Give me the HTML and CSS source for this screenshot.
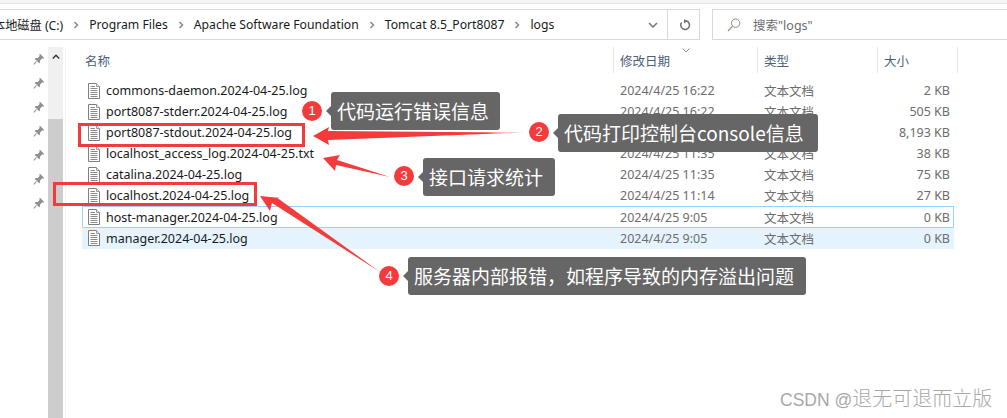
FILE: index.html
```html
<!DOCTYPE html>
<html lang="zh-CN">
<head>
<meta charset="utf-8">
<title>logs</title>
<link rel="stylesheet" href="styles.css">
</head>
<body>
<svg class="defs" width="0" height="0" aria-hidden="true">
  <symbol id="pin" viewBox="0 0 12 12">
    <path d="M7 .8 11.2 5 10.2 5.8 9.3 5.3 7 7.4 7 9.6 6.1 10.3 1.8 6 2.6 5.1 4.7 5 6.8 2.8 6.2 1.8Z" fill="#8f8f8f"/>
    <path d="M3.4 8.6 .8 11.4" stroke="#9a9a9a" stroke-width="1.2" fill="none"/>
  </symbol>
  <symbol id="doc" viewBox="0 0 12 16">
    <path d="M.5.5H8.5L11.5 3.5V15.5H.5Z" fill="#fff" stroke="#7f7f7f"/>
    <path d="M8.5 .5V3.5H11.5" fill="#eee" stroke="#9a9a9a"/>
    <path d="M2.5 3.5H7M2.5 5.5H9.5M2.5 7.5H9.5M2.5 9.5H9.5M2.5 11.5H9.5M2.5 13.5H9.5" stroke="#8a8a8a" fill="none"/>
  </symbol>
  <symbol id="crumb" viewBox="0 0 6 8">
    <path d="M1.5 1 4.5 4 1.5 7" stroke="#8a8a8a" stroke-width="1.5" fill="none"/>
  </symbol>
</svg>

<div class="top-strip"></div>
<div class="toolbar">
  <div class="address">
    <span class="drive">本地磁盘 (C:)</span>
    <svg class="sep"><use href="#crumb"/></svg>
    <span>Program Files</span>
    <svg class="sep"><use href="#crumb"/></svg>
    <span>Apache Software Foundation</span>
    <svg class="sep"><use href="#crumb"/></svg>
    <span>Tomcat 8.5_Port8087</span>
    <svg class="sep"><use href="#crumb"/></svg>
    <span>logs</span>
    <svg class="drop" viewBox="0 0 10 6"><path d="M1 1 5 5 9 1" stroke="#777" stroke-width="1.5" fill="none"/></svg>
  </div>
  <div class="refresh">
    <svg viewBox="0 0 12 12" width="12" height="12"><path d="M7.2 1.8A4.4 4.4 0 1 1 2.6 3.4" stroke="#6f6f6f" stroke-width="1.5" fill="none"/><path d="M5 .2 8.4 2 5 4.4Z" fill="#6f6f6f"/></svg>
  </div>
  <div class="search">
    <svg viewBox="0 0 14 14" width="14" height="14"><circle cx="8.6" cy="5.2" r="4.2" stroke="#8a8a8a" fill="none"/><path d="M5.6 8.2 1 13" stroke="#b08a70" stroke-width="1.2" fill="none"/></svg>
    <span>搜索"logs"</span>
  </div>
</div>

<div class="main">
  <div class="pins">
    <svg class="pin"><use href="#pin"/></svg>
    <svg class="pin"><use href="#pin"/></svg>
    <svg class="pin"><use href="#pin"/></svg>
    <svg class="pin"><use href="#pin"/></svg>
    <svg class="pin"><use href="#pin"/></svg>
    <svg class="pin"><use href="#pin"/></svg>
    <svg class="pin"><use href="#pin"/></svg>
  </div>
  <div class="scrollbar">
    <div class="scroll-up"><svg viewBox="0 0 8 5" width="8" height="5"><path d="M.8 4.4 4 1.2 7.2 4.4" stroke="#333" stroke-width="1.4" fill="none"/></svg></div>
    <div class="thumb"></div>
  </div>
  <div class="list">
    <div class="head">
      <div class="hcell hname">名称</div>
      <div class="hcell hdate">修改日期
        <svg class="sort" viewBox="0 0 8 5" width="8" height="5"><path d="M.5.5 4 4 7.5.5" stroke="#8a8a8a" fill="none"/></svg>
      </div>
      <div class="hcell htype">类型</div>
      <div class="hcell hsize">大小</div>
    </div>
    <div class="rows">
      <div class="row"><div class="name"><svg class="doc"><use href="#doc"/></svg>commons-daemon.2024-04-25.log</div><div class="meta">2024/4/25 16:22</div><div class="meta">文本文档</div><div class="size">2 KB</div></div>
      <div class="row"><div class="name"><svg class="doc"><use href="#doc"/></svg>port8087-stderr.2024-04-25.log</div><div class="meta">2024/4/25 16:22</div><div class="meta">文本文档</div><div class="size">505 KB</div></div>
      <div class="row"><div class="name"><svg class="doc"><use href="#doc"/></svg>port8087-stdout.2024-04-25.log</div><div class="meta">2024/4/25 11:35</div><div class="meta">文本文档</div><div class="size">8,193 KB</div></div>
      <div class="row"><div class="name"><svg class="doc"><use href="#doc"/></svg>localhost_access_log.2024-04-25.txt</div><div class="meta">2024/4/25 11:35</div><div class="meta">文本文档</div><div class="size">38 KB</div></div>
      <div class="row"><div class="name"><svg class="doc"><use href="#doc"/></svg>catalina.2024-04-25.log</div><div class="meta">2024/4/25 11:35</div><div class="meta">文本文档</div><div class="size">75 KB</div></div>
      <div class="row"><div class="name"><svg class="doc"><use href="#doc"/></svg>localhost.2024-04-25.log</div><div class="meta">2024/4/25 11:14</div><div class="meta">文本文档</div><div class="size">27 KB</div></div>
      <div class="row focused"><div class="name"><svg class="doc"><use href="#doc"/></svg>host-manager.2024-04-25.log</div><div class="meta">2024/4/25 9:05</div><div class="meta">文本文档</div><div class="size">0 KB</div></div>
      <div class="row selected"><div class="name"><svg class="doc"><use href="#doc"/></svg>manager.2024-04-25.log</div><div class="meta">2024/4/25 9:05</div><div class="meta">文本文档</div><div class="size">0 KB</div></div>
    </div>
  </div>
</div>

<svg class="arrows" viewBox="0 0 1007 418" aria-hidden="true">
  <defs>
    <linearGradient id="tail" x1="0" x2="1" y1="0" y2="0">
      <stop offset="0" stop-color="#f33b3b"/>
      <stop offset="0.82" stop-color="#f33b3b"/>
      <stop offset="1" stop-color="#f33b3b" stop-opacity="0.15"/>
    </linearGradient>
  </defs>
  <polygon class="fade" points="525,132.5 328,131 329,127 313,136 329,145 328,140"/>
  <polygon points="390,177 337,160 340,155 323,158 335,171 336,165"/>
  <polygon points="380,272 276,197 280,198 260,196 270,211 272,203"/>
</svg>
<div class="redbox rb1"></div>
<div class="redbox rb2"></div>

<div class="badge b1">1</div>
<div class="bubble c1">代码运行错误信息</div>
<div class="badge b2">2</div>
<div class="bubble c2">代码打印控制台console信息</div>
<div class="badge b3">3</div>
<div class="bubble c3">接口请求统计</div>
<div class="badge b4">4</div>
<div class="bubble c4">服务器内部报错，如程序导致的内存溢出问题</div>

<div class="watermark">CSDN @<span class="wm-cjk">退无可退而立版</span></div>
</body>
</html>
```
FILE: styles.css
```css
* { box-sizing: border-box; }
html, body { margin: 0; height: 100%; }
body {
  width: 1007px;
  height: 418px;
  overflow: hidden;
  background: #fff;
  position: relative;
  display: flex;
  flex-direction: column;
  font-family: "Noto Sans", "Noto Sans CJK SC", sans-serif;
  font-size: 12.5px;
  color: #1a1a1a;
}
.defs { position: absolute; }

.top-strip {
  height: 4px;
  background: #f5f5f5;
  border-bottom: 1px solid #e3e3e3;
}
.toolbar {
  height: 36px;
  padding-top: 5px;
  display: flex;
}
.address {
  width: 668px;
  height: 31px;
  border: 1px solid #d9d9d9;
  border-left: 0;
  display: flex;
  align-items: center;
  white-space: nowrap;
  overflow: hidden;
  position: relative;
  flex: none;
  font-size: 12.2px;
}
.drive { margin-left: -7px; }
.sep { width: 6px; height: 8px; margin: 0 10px; flex: none; }
.drop { width: 10px; height: 6px; margin-left: auto; margin-right: 9px; }
.refresh {
  width: 32px;
  height: 31px;
  border: 1px solid #d9d9d9;
  border-left: 0;
  display: flex;
  align-items: center;
  justify-content: center;
  flex: none;
  padding-left: 2px;
}
.search {
  margin-left: 12px;
  flex: 1;
  height: 31px;
  border: 1px solid #d9d9d9;
  border-right: 0;
  display: flex;
  align-items: center;
  padding-left: 14px;
  gap: 12px;
  color: #6d6d6d;
}

.main {
  flex: 1;
  display: flex;
  padding-top: 7px;
  min-height: 0;
}
.pins {
  width: 48px;
  padding: 6px 0 0 33px;
  display: flex;
  flex-direction: column;
  gap: 12px;
  flex: none;
}
.pin { width: 12px; height: 12px; display: block; }
.scrollbar {
  width: 15px;
  background: #f0f0f0;
  display: flex;
  flex-direction: column;
  flex: none;
}
.scroll-up {
  height: 72px;
  display: flex;
  justify-content: center;
  padding-top: 7px;
}
.thumb { flex: 1; background: #cdcdcd; }

.list {
  flex: 1;
  margin-left: 2px;
  border-left: 1px solid #f5f5f5;
}
.head {
  display: grid;
  grid-template-columns: 548px 144px 120px 80px;
  height: 26px;
}
.hcell {
  display: flex;
  align-items: center;
  padding-left: 6px;
  color: #4c607a;
  border-right: 1px solid #e5e5e5;
  position: relative;
  white-space: nowrap;
}
.hname { padding-left: 19px; }
.sort { position: absolute; top: 1px; left: 68px; }

.rows { margin: 7px 53px 0 16px; }
.row {
  display: grid;
  grid-template-columns: 531px 144px 120px 75px;
  height: 21px;
  align-items: center;
  border: 1px solid transparent;
  white-space: nowrap;
}
.focused { border-color: #99d1ff; height: 22px; margin-bottom: -1px; }
.selected { background: #e5f3ff; height: 22px; border-color: #e5f3ff; border-top-color: #99d1ff; }
.name { display: flex; align-items: center; padding-left: 5px; color: #1a1a1a; }
.doc { width: 12px; height: 16px; margin-right: 6px; flex: none; }
.meta { padding-left: 6px; color: #6d6d6d; }
.size { text-align: right; padding-right: 3px; color: #6d6d6d; }

.arrows {
  position: absolute;
  left: 0;
  top: 0;
  width: 1007px;
  height: 418px;
  fill: #f33b3b;
}
.fade { fill: url(#tail); }
.redbox { position: absolute; border: 3px solid #f33b3b; }
.rb1 { left: 78px; top: 123px; width: 227px; height: 24px; }
.rb2 { left: 53px; top: 182px; width: 204px; height: 24px; }

.badge {
  position: absolute;
  width: 20px;
  height: 20px;
  border-radius: 50%;
  background: #f33b3b;
  color: #fff;
  font: 13px/20px "Liberation Sans", sans-serif;
  text-align: center;
}
.b1 { left: 302px; top: 101px; }
.b2 { left: 529px; top: 122px; }
.b3 { left: 394px; top: 166px; }
.b4 { left: 379px; top: 266px; }

.bubble {
  position: absolute;
  height: 38px;
  background: #666;
  border-radius: 3px;
  color: #fff;
  font: 19px/38px "Noto Sans CJK SC", "Noto Sans", sans-serif;
  padding: 0 6px;
  white-space: nowrap;
}
.bubble::before {
  content: "";
  position: absolute;
  left: -5px;
  top: 14px;
  border-style: solid;
  border-width: 5px 5px 5px 0;
  border-color: transparent #666 transparent transparent;
}
.c1 { left: 331px; top: 92px; width: 169px; }
.c2 { left: 558px; top: 114px; width: 260px; }
.c3 { left: 423px; top: 158px; width: 132px; }
.c4 { left: 408px; top: 257px; width: 398px; }

.watermark {
  position: absolute;
  left: 780px;
  top: 386px;
  font: 17.5px/26px "Liberation Sans", "Noto Sans CJK SC", sans-serif;
  color: #a8a8a8;
  white-space: nowrap;
}
.wm-cjk { font-size: 20px; font-weight: 300; }
```
